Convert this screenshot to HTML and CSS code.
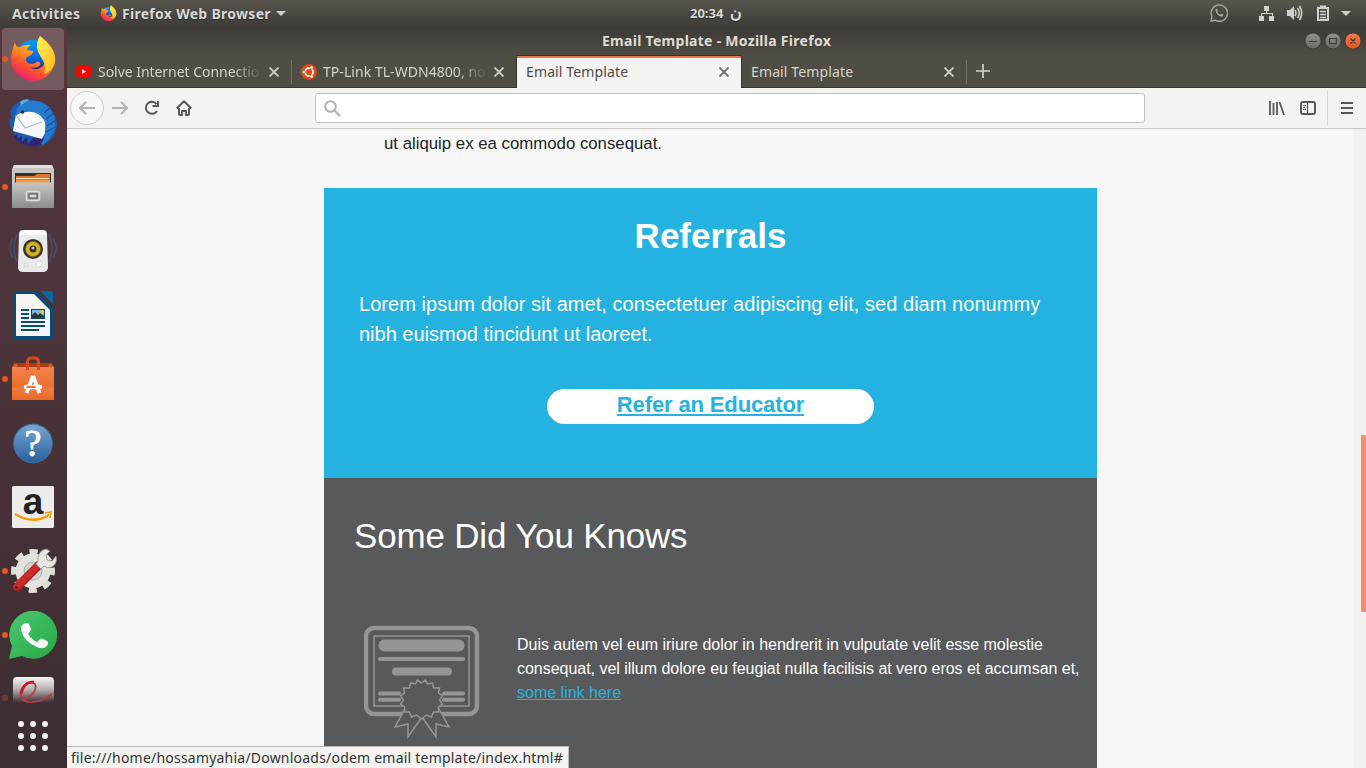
FILE: index.html
```html
<!DOCTYPE html>
<html lang="en">
<head>
<meta charset="utf-8">
<title>Email Template</title>
<link rel="stylesheet" href="styles.css">
</head>
<body>
<header class="panel">
  <span class="activities">Activities</span>
  <span class="appmenu">
    <svg width="17" height="17" viewBox="0 0 48 48"><use href="#firefox"/></svg>
    <span class="appname">Firefox Web Browser</span>
    <svg width="10" height="5"><path d="M0 0H10L5 5Z" fill="#cfcecb"/></svg>
  </span>
  <span class="clock"><span class="time">20:34</span><span class="noon">ن</span></span>
  <span class="tray">
    <svg class="t-wa" width="18" height="18" viewBox="0 0 18 18" fill="none" stroke="#a5a4a0" stroke-width="1.5"><path d="M1 17l1-4.200A8.200 8.200 0 1 1 5.200 16.200Z"/><path d="M5.500 5.200l1.400-.5 1 2-.6 1c.6 1.300 1.600 2.300 3 2.900l1-.8 2 1-.5 1.500c-3 1.200-7.500-3-7.300-7.100z" fill="#a5a4a0" stroke="none"/></svg>
    <svg class="t-net" width="16" height="16" fill="#d2d1ce"><path d="M5 1h5v5H8v2h6v3h1v5h-5v-5h3V9H3v2h2v5H0v-5h2V8h5V6H5z"/></svg>
    <svg class="t-vol" width="16" height="16" viewBox="0 0 16 16" fill="none" stroke="#d2d1ce" stroke-width="1.600"><path d="M0 5h3l4-4v14l-4-4H0z" fill="#d2d1ce" stroke="none"/><path d="M8 5q2 3 0 6M10.500 3q3.500 5 0 10M12.500 1q4.500 7 0 14"/></svg>
    <svg class="t-bat" width="12" height="16" fill="none" stroke="#d2d1ce" stroke-width="2"><path d="M1 3h10v12H1zM3 1.500h6"/><path d="M3 6.500h6M3 9.500h6M3 12.500h6" stroke-width="1.500"/></svg>
    <svg class="t-arr" width="10" height="5"><path d="M0 0H10L5 5Z" fill="#cfcecb"/></svg>
  </span>
</header>

<div class="desktop">
  <nav class="dock">
    <div class="launchers">
      <div class="app active running">
        <svg viewBox="0 0 48 48">
          <defs>
            <linearGradient id="fx" x1=".8" y1="0" x2=".2" y2="1"><stop offset="0" stop-color="#ffdf35"/><stop offset=".4" stop-color="#ff9320"/><stop offset=".68" stop-color="#fc4c33"/><stop offset="1" stop-color="#e4147f"/></linearGradient>
            <linearGradient id="fb" x1="0" y1="0" x2="0" y2="1"><stop offset="0" stop-color="#079fee"/><stop offset=".5" stop-color="#0568df"/><stop offset=".85" stop-color="#302577"/></linearGradient>
            <linearGradient id="fy" x1="0" y1="0" x2="1" y2="1"><stop offset="0" stop-color="#fff457"/><stop offset="1" stop-color="#ffb81f"/></linearGradient>
            <g id="firefox">
              <circle cx="24" cy="23" r="18" fill="url(#fb)"/>
              <path d="M6 7q0 5 5 5 5-3 11-2-4 3-4 5l6 1q1 1-1 3l-6 4c-1 5 5 8 11 4 4-1 5 4 0 5-3 1-5 1-7 0 6 5 15 1 16-8 0-8-4-11-4-15L35 8c8 6 12 10 11 19-2 11-11 19-22 19S2 37 2 25c0-6 2-12 4-18z" fill="url(#fx)"/>
              <path d="M31 1c9 7 16 14 15 26-2 7-6 10-11 12 5-13-8-18-7-29 0-3 1-6 3-9z" fill="url(#fy)"/>
            </g>
          </defs>
          <use href="#firefox"/>
        </svg>
      </div>
      <div class="app">
        <svg viewBox="0 0 48 48">
          <path d="M1 12q6-11 17-11 12 0 20 5 9 6 10 19-1 18-18 22l3-4-7 4 1-4-6 3q-9-1-14-9-7-8-7-19l3 3z" fill="#1e5bb2"/>
          <path d="M9 34l-1 6 5-3 0 6 5-5 1 7 5-6h16q-4 6-11 8-16 2-24-9z" fill="#302576"/>
          <path d="M4 32l3-17q14-6 30-1l-1 20-3 6z" fill="#f7f8fc"/>
          <path d="M7 16l9 13 17-6" fill="none" stroke="#b2b8c4" stroke-width="1.300"/>
          <path d="M7 15q2-12 13-13 17-2 24 13 7 16-8 29-2 2-4 1l3-6q4-11 0-18-6-10-19-8-5 0-9 4z" fill="#257bd0"/>
          <path d="M35 14l6-5M37 20l8-6M38 27l9-6M37 33l9-5" fill="none" stroke="#1751a5" stroke-width="1.200"/>
          <circle cx="13.500" cy="13" r="1.800" fill="#233044"/><path d="M11 3q4-4 10-2-6 2-9 6z" fill="#5baae0"/>
        </svg>
      </div>
      <div class="app running">
        <svg viewBox="0 0 48 48">
          <defs><linearGradient id="mt" x2="0" y2="1"><stop stop-color="#c5c5c4"/><stop offset="1" stop-color="#8c8c8a"/></linearGradient></defs>
          <path d="M5 2h38l2 4v38H3V6z" fill="#c6c6c4"/><path d="M5 2h38l1 3H4z" fill="#e1e1df"/>
          <path d="M6 10h36v10H6z" fill="#35302d"/><path d="M7 13h18l3-2h13v9H7z" fill="#df742a"/><path d="M7 15h33v1H7z" fill="#ffe3bd"/>
          <path d="M7 17h34v3H7z" fill="#f49b4b"/>
          <path d="M3 19.500h42V45H3z" fill="url(#mt)"/>
          <rect x="17.500" y="28.500" width="13" height="9" rx="1" fill="#aaa" stroke="#dededc" stroke-width="1.500"/><rect x="20" y="31" width="8" height="4" fill="#ddd" stroke="#444" stroke-width="1"/>
        </svg>
      </div>
      <div class="app">
        <svg viewBox="0 0 48 48">
          <g fill="none" stroke="#47506a" stroke-width="1.500"><path d="M8 7q-6 14 0 28M4 11q-6 10 0 20M40 7q6 14 0 28M44 11q6 10 0 20"/></g>
          <path d="M14 3h20q4 0 4 4l1 33q0 5-5 5H14q-5 0-5-5l1-33q0-4 4-4z" fill="#e9e9e7"/><path d="M14 3h20q3 1 3 5H11q0-4 3-5z" fill="#fafafa"/>
          <circle cx="24" cy="22" r="10" fill="#333"/><circle cx="24" cy="22" r="7.500" fill="#d5b520" stroke="#887010"/><circle cx="24" cy="22" r="3.500" fill="#333"/><circle cx="24" cy="21" r="1.500" fill="#bbb"/>
          <circle cx="30" cy="37" r="3" fill="#fff" stroke="#d6d6d4"/><circle cx="17" cy="38" r="2" fill="none" stroke="#d8d8d8"/>
        </svg>
      </div>
      <div class="app">
        <svg viewBox="0 0 48 48">
          <path d="M6 0h21l17 17v29q0 2-2 2H6q-2 0-2-2V2q0-2 2-2z" fill="#084b78"/><path d="M7 3h18l16 16v26H7z" fill="#f4f4f3"/><path d="M31 0h11q2 0 2 2v11z" fill="#0369a3"/>
          <path d="M12 19h8M12 23h8M12 27h8M12 31h24M12 35h24M12 39h18" stroke="#084b78" stroke-width="2"/>
          <path d="M22 18h14v10H22z" fill="#084b78"/><path d="M23 19h12v8H23z" fill="#72bce1"/><circle cx="33" cy="21" r="2" fill="#f4c63b"/><path d="M23 27v-3l3-3 3 3 2-2 4 3v2z" fill="#333"/>
        </svg>
      </div>
      <div class="app running">
        <svg viewBox="0 0 48 48">
          <defs><linearGradient id="or" x2="0" y2="1"><stop stop-color="#f0834c"/><stop offset=".6" stop-color="#ed702f"/><stop offset=".65" stop-color="#f17c40"/><stop offset="1" stop-color="#e96727"/></linearGradient></defs>
          <path d="M5 8h38l2 5H3z" fill="#a93b15"/><path d="M3 12l4-4 2 4zM39 12l2-4 4 4z" fill="#d95b29"/><path d="M3 12h42v33H3z" fill="url(#or)"/>
          <path d="M18.500 15V7q0-4 4-4h3q4 0 4 4v8" fill="none" stroke="#d84a1d" stroke-width="3"/>
          <path d="M24 21l-6.500 17M24 21l6.500 17" stroke="#fff" stroke-width="3.800"/><path d="M17 32h14" stroke="#fff" stroke-width="4.500" stroke-linecap="round"/><path d="M17.500 32h9" stroke="#ed702f" stroke-width="2"/>
        </svg>
      </div>
      <div class="app">
        <svg viewBox="0 0 48 48"><defs><linearGradient id="hp" x2="0" y2="1"><stop stop-color="#79a6d3"/><stop offset="1" stop-color="#28609d"/></linearGradient></defs>
          <circle cx="24" cy="24.500" r="19.300" fill="url(#hp)" stroke="#3f74aa"/>
          <text class="help-mark" x="24" y="37" text-anchor="middle">?</text></svg>
      </div>
      <div class="app">
        <svg viewBox="0 0 48 48"><rect x="3" y="3" width="42" height="42" rx="1.500" fill="#ececeb"/><text class="amazon-mark" x="24" y="31" text-anchor="middle">a</text>
          <path d="M6 31q18 11 34 1" fill="none" stroke="#f90" stroke-width="2.300"/><path d="M36 30l6-1-1 6" fill="none" stroke="#f90" stroke-width="1.500"/></svg>
      </div>
      <div class="app running">
        <svg viewBox="0 0 48 48">
          <circle cx="24" cy="24" r="19.500" fill="none" stroke="#deded9" stroke-width="5" stroke-dasharray="8.300 7.015" stroke-dashoffset="4.150"/>
          <circle cx="24" cy="24" r="13" fill="#bdbdbb" stroke="#e2e2df" stroke-width="9"/><circle cx="24" cy="24" r="9" fill="#d4d4d2" stroke="#aaa" stroke-width="1"/>
          <path d="M8 40L30 18" stroke="#a51d1b" stroke-width="8.500" stroke-linecap="round"/><path d="M8 39.500L30 17.500" stroke="#cd2b27" stroke-width="6.500" stroke-linecap="round"/>
          <path d="M29 14q-1-10 8-12l4 2-4 4 1 5 5 1 4-5q2 7-4 11-5 2-8-1l-3 3-5-5z" fill="#e5e5e4" stroke="#91918f" stroke-width=".8"/><circle cx="7.500" cy="40.500" r="1.300" fill="#501513"/>
        </svg>
      </div>
      <div class="app running">
        <svg viewBox="0 0 48 48"><defs><linearGradient id="wa" x1="0" y1="0" x2="1" y2="1"><stop stop-color="#4cc770"/><stop offset="1" stop-color="#25a944"/></linearGradient></defs>
          <path d="M0 48l3-13A24 24 0 1 1 13 45z" fill="url(#wa)"/><path d="M14 13l4-1q2 0 3 3l1 4-3 4q4 6 9 8l3-3q1-1 3 0l4 2q2 1 0 5-4 4-10 1Q15 31 12 19q0-4 2-6z" fill="#fff"/></svg>
      </div>
      <div class="app last running">
        <svg viewBox="0 0 48 48"><defs><linearGradient id="dc" x2="0" y2="1"><stop stop-color="#f5f5f5"/><stop offset=".3" stop-color="#b5adaf"/><stop offset=".6" stop-color="#42323a"/></linearGradient></defs>
          <rect x="4" y="2" width="41" height="42" rx="4" fill="url(#dc)"/><path d="M13 24C24 23 28 14 26 9 18 4 10 14 12 22c4 8 20 6 31-3" fill="none" stroke="#ad3f44" stroke-width="1.800"/><path d="M12 19q3-13 13-12" fill="none" stroke="#d01920" stroke-width="2.500"/></svg>
      </div>
    </div>
    <svg class="grid" width="30" height="30" fill="#f5f3f3"><g id="dots"><circle cx="3" cy="3" r="3"/><circle cx="15" cy="3" r="3"/><circle cx="27" cy="3" r="3"/></g><use href="#dots" y="12"/><use href="#dots" y="24"/></svg>
  </nav>

  <main class="window">
    <div class="titlebar">
      <span class="wintitle">Email Template - Mozilla Firefox</span>
      <svg class="controls" width="58" height="18">
        <defs><linearGradient id="gb" x2="0" y2="1"><stop stop-color="#92918b"/><stop offset="1" stop-color="#686760"/></linearGradient><linearGradient id="cb" x2="0" y2="1"><stop stop-color="#f37a53"/><stop offset="1" stop-color="#e4541e"/></linearGradient></defs>
        <g stroke="#32312c" stroke-width=".7"><circle cx="9" cy="9" r="8" fill="url(#gb)"/><circle cx="29" cy="9" r="8" fill="url(#gb)"/><circle cx="49" cy="9" r="8" fill="url(#cb)"/></g>
        <path d="M5 9.500h8M25.500 6.500h7v5h-7zM46.500 6.500l5 5M51.500 6.500l-5 5" fill="none" stroke="#3b3a35" stroke-width="1.200"/>
      </svg>
    </div>
    <div class="tabs">
      <div class="tab sep first"><svg class="yt" width="15" height="11"><rect width="15" height="11" rx="2.500" fill="#f00"/><path d="M6 3l4 2.500L6 8z" fill="#fff"/></svg><span class="label fade l1">Solve Internet Connectio</span><svg class="x" width="10" height="10"><path d="M.5.5l9 9M9.500.5l-9 9"/></svg></div>
      <div class="tab second"><svg class="ub" width="16" height="16"><circle cx="8" cy="8" r="8" fill="#dd4814"/><circle cx="8" cy="8" r="4" fill="none" stroke="#fff" stroke-width="1.800"/><g fill="#fff" stroke="#dd4814" stroke-width=".7"><circle cx="2.800" cy="8" r="1.700"/><circle cx="10.600" cy="3.500" r="1.700"/><circle cx="10.600" cy="12.500" r="1.700"/></g></svg><span class="label fade l2">TP-Link TL-WDN4800, no</span><svg class="x" width="10" height="10"><path d="M.5.5l9 9M9.500.5l-9 9"/></svg></div>
      <div class="tab current"><span class="label">Email Template</span><svg class="x" width="10" height="10"><path d="M.5.5l9 9M9.500.5l-9 9"/></svg></div>
      <div class="tab sep"><span class="label">Email Template</span><svg class="x" width="10" height="10"><path d="M.5.5l9 9M9.500.5l-9 9"/></svg></div>
      <svg class="plus" width="14" height="14"><path d="M7 0v14M0 7h14" stroke="#d4d2cb" stroke-width="1.700"/></svg>
    </div>
    <div class="toolbar">
      <span class="back"><svg width="16" height="14" fill="none" stroke="#b4b3b1" stroke-width="2"><path d="M16 7H1M7 1L1 7l6 6"/></svg></span>
      <svg class="fwd" width="16" height="14" fill="none" stroke="#b4b3b1" stroke-width="2"><path d="M0 7h15M9 1l6 6-6 6"/></svg>
      <svg class="reload" width="16" height="16" fill="none" stroke="#595856" stroke-width="2"><path d="M12.500 4A6 6 0 1 0 13 11"/><path d="M14 1v5H8.500" /></svg>
      <svg class="home" width="16" height="16" fill="none" stroke="#595856" stroke-width="2"><path d="M.7 8.500L8 1.300l7.300 7.200M3 8v6q0 1 1 1h2v-4h4v4h2q1 0 1-1V8" stroke-linejoin="round"/></svg>
      <div class="url"><svg width="17" height="17" fill="none" stroke="#b1b1b1" stroke-width="2"><circle cx="6.500" cy="6.500" r="5.300"/><path d="M10.500 10.500l5.500 5.500" stroke-width="2.300"/></svg></div>
      <svg class="lib" width="16" height="15" fill="none" stroke="#595856" stroke-width="1.800"><path d="M1 0v14M4.500 2v12M8 1v13M10.500 1L15 14"/></svg>
      <svg class="side" width="16" height="14" fill="none" stroke="#595856" stroke-width="2"><rect x="1" y="1" width="14" height="12" rx="2"/><path d="M7.500 1v12" stroke-width="1.200"/><path d="M3 4.500h3M3 6.500h2M3 8.500h3" stroke-width="1"/></svg>
      <span class="menu"><svg width="12" height="12" stroke="#595856" stroke-width="2"><path d="M0 1h12M0 6h12M0 11h12"/></svg></span>
    </div>
    <div class="view">
      <div class="page">
        <p class="tail">ut aliquip ex ea commodo consequat.</p>
        <section class="referrals">
          <h2>Referrals</h2>
          <p><span class="r1">Lorem ipsum dolor sit amet, consectetuer adipiscing elit, sed diam nonummy</span><br>nibh euismod tincidunt ut laoreet.</p>
          <a class="cta"><span>Refer an Educator</span></a>
        </section>
        <section class="facts">
          <h2>Some Did You Knows</h2>
          <div class="fact">
            <svg width="117" height="114" fill="none" stroke="#939598">
              <rect x="2" y="3" width="111" height="86" rx="8" stroke-width="4.500"/><rect x="10" y="11" width="95" height="70" stroke-width="1.500"/>
              <g stroke-linecap="round"><path d="M20.500 20.500h74" stroke-width="12"/><path d="M16 34h83" stroke-width="4"/><path d="M32 46.500h52" stroke-width="8"/><path d="M16 68.500h19M80 68.500h19M16 74.800h19M80 74.800h19" stroke-width="4"/></g>
              <path d="M41 84L31 102l13-3v13l14-20zM75 84l10 18-13-3v13L58 92z" fill="#58595b" stroke-width="1.500"/>
              <path d="M57.500 58l4-3 2 4 5-1 1 5 6 0-1 5 4 3-3 4 3 4-4 3 0 5-5 0-2 5-5-2-5 4-5-4-5 2-2-5-5 0 0-5-4-3 3-4-3-4 4-3-1-5 6 0 1-5 5 1 2-4z" fill="#58595b" stroke-width="1.500"/>
            </svg>
            <p><span class="d1">Duis autem vel eum iriure dolor in hendrerit in vulputate velit esse molestie</span><br><span class="d2">consequat, vel illum dolore eu feugiat nulla facilisis at vero eros et accumsan et,</span><br><a>some link here</a></p>
          </div>
        </section>
      </div>
      <div class="scroll"><div class="thumb"></div></div>
      <div class="status"><span>file:///home/hossamyahia/Downloads/odem email template/index.html#</span></div>
    </div>
  </main>
</div>
</body>
</html>
```
FILE: styles.css
```css
* { box-sizing: border-box; }
body { margin: 0; width: 1366px; height: 768px; overflow: hidden; font: 14px "Noto Sans", "Open Sans", sans-serif; display: flex; flex-direction: column; }
svg { display: block; flex: none; }
h2, p { margin: 0; }
.panel { height: 27px; flex: none; display: flex; align-items: center; background: linear-gradient(#58554d, #3d3c37); color: #d9d8d4; font-weight: 700; white-space: nowrap; text-shadow: 0 1px 1px #2b2a27; padding-bottom: 1px; }
.activities { margin-left: 12px; width: 88px; letter-spacing: .33px; }
.appmenu { display: flex; align-items: center; gap: 5px; width: 590px; }
.appname { letter-spacing: .29px; }
.clock { display: flex; align-items: center; gap: 7px; width: 520px; height: 24px; font-size: 13px; }
.noon { font-size: 16px; line-height: 18px; padding-bottom: 3px; }
.tray { display: flex; align-items: center; }
.t-wa { margin-right: 31px; }
.t-net { margin-right: 12px; }
.t-vol { margin-right: 14px; }
.t-bat { margin-right: 12px; }
.desktop { flex: 1; min-height: 0; display: flex; }
.dock { width: 67px; flex: none; background: linear-gradient(#55363b, #4e353b 30%, #3c2d33); display: flex; flex-direction: column; align-items: center; }
.launchers { width: 67px; height: 676px; overflow: hidden; padding-top: 1px; }
.app { height: 62px; margin: 0 3px 2px 2px; border-radius: 4px; padding: 7px 0 0 7px; position: relative; }
.app svg { width: 48px; height: 48px; }
.active { background: #745b60; }
.running::before { content: ""; position: absolute; left: 0; top: 28px; width: 6px; height: 6px; border-radius: 50%; background: #e95420; }
.last { padding-top: 7px; }
.last::before { opacity: .3; top: 27px; }
.grid { margin: 18px 1px 0 0; }
.help-mark { font: 38px "Liberation Serif", serif; fill: #fff; stroke: #fff; stroke-width: .8px; }
.amazon-mark { font: 700 37px "Liberation Sans", sans-serif; fill: #222; }
.window { flex: 1; min-width: 0; display: flex; flex-direction: column; }
.titlebar { height: 28px; flex: none; display: flex; justify-content: flex-end; align-items: center; background: linear-gradient(#3b3a36, #4f4c44); color: #dfdbd2; font-weight: 700; white-space: nowrap; }
.wintitle { width: 702px; font-size: 14px; letter-spacing: .28px; padding-bottom: 2px; }
.controls { margin-right: 4px; }
.tabs { height: 33px; flex: none; display: flex; background: #504d45; border-bottom: 1px solid #35342f; color: #d6d3ca; }
.tab { width: 225px; height: 32px; display: flex; align-items: center; padding: 1px 13px 0 9px; letter-spacing: .13px; position: relative; }
.tab.first { padding-left: 9px; }
.tab.second { width: 224px; padding: 1px 12px 0 10px; }
.tab.sep::after { content: ""; position: absolute; right: 0; top: 5px; width: 1px; height: 24px; background: #74716a; }
.current { width: 226px; height: 33px; background: #f4f3f1; color: #4c4b49; border: solid #35342f; border-width: 1px 1px 0; box-shadow: inset 0 2px #ee774b; padding: 0 12px 1px 9px; }
.label { flex: 1; min-width: 0; white-space: nowrap; overflow: hidden; }
.fade { -webkit-mask-image: linear-gradient(90deg, #000 82%, transparent); mask-image: linear-gradient(90deg, #000 82%, transparent); margin-right: 7px; }
.l1 { letter-spacing: -.04px; }
.l2 { letter-spacing: .05px; }
.x { stroke: #d0cec7; stroke-width: 1.8; }
.current .x { stroke: #666; }
.yt { margin-right: 7px; }
.ub { margin: 0 6px 0 -1px; }
.plus { margin: 9px 0 0 9px; }
.toolbar { height: 41px; flex: none; background: #f4f3f1; border-bottom: 1px solid #c8c5c1; display: flex; align-items: center; }
.back { width: 34px; height: 34px; margin-left: 3px; border: 1px solid #cfcdca; border-radius: 50%; background: #f8f8f7; display: grid; place-items: center; }
.fwd { margin-left: 8px; }
.reload { margin-left: 16px; }
.home { margin-left: 16px; }
.url { width: 830px; height: 30px; margin-left: 123px; border: 1px solid #c3c1be; border-radius: 3px; background: #fff; padding: 6px 0 0 8px; }
.lib { margin-left: 124px; }
.side { margin-left: 15px; }
.menu { margin-left: 11px; height: 34px; padding: 11px 13px 0; border-left: 1px solid #d6d4d1; }
.view { flex: 1; min-height: 0; background: #f7f7f7; display: flex; position: relative; overflow: hidden; font-family: "Liberation Sans", Arial, sans-serif; }
.page { width: 773px; margin-left: 257px; margin-right: 257px; }
.tail { height: 59px; padding: 5px 0 0 60px; font-size: 16.8px; line-height: 20px; color: #212529; }
.referrals { height: 290px; background: #24b3e1; color: #fff; padding: 27px 35px 0; }
.referrals h2 { font-size: 35px; line-height: 42px; text-align: center; }
.referrals p { margin-top: 32px; font-size: 20px; line-height: 30px; white-space: nowrap; }
.r1 { letter-spacing: .042px; }
.cta { display: block; width: 327px; height: 35px; margin: 40px auto 0; border-radius: 18px; background: #fff; color: #24b3e1; font-size: 22px; font-weight: 700; line-height: 32px; letter-spacing: -.13px; text-align: center; text-decoration: underline; }
.facts { height: 300px; background: #58595b; color: #fff; padding: 37px 0 0 30px; }
.facts h2 { font-size: 35px; font-weight: 400; line-height: 42px; letter-spacing: -.18px; }
.fact { margin: 68px 0 0 10px; display: flex; }
.fact p { margin: 8px 0 0 36px; font-size: 16px; line-height: 24px; white-space: nowrap; }
.d1 { letter-spacing: -.018px; }
.d2 { letter-spacing: -.027px; }
.fact a { color: #24b3e1; text-decoration: underline; }
.scroll { width: 12px; background: #f2f1f0; padding: 306px 0 0 7px; }
.thumb { height: 177px; background: #f19069; border-radius: 1px 0 0 1px; }
.status { position: absolute; left: 0; bottom: 0; width: 502px; height: 22px; border: 1px solid #bcb9b6; border-width: 1px 1px 0 0; background: #f4f3f1; color: #2e3436; font: 14px/21px "Noto Sans", sans-serif; letter-spacing: .215px; padding-left: 4px; white-space: nowrap; }
```
